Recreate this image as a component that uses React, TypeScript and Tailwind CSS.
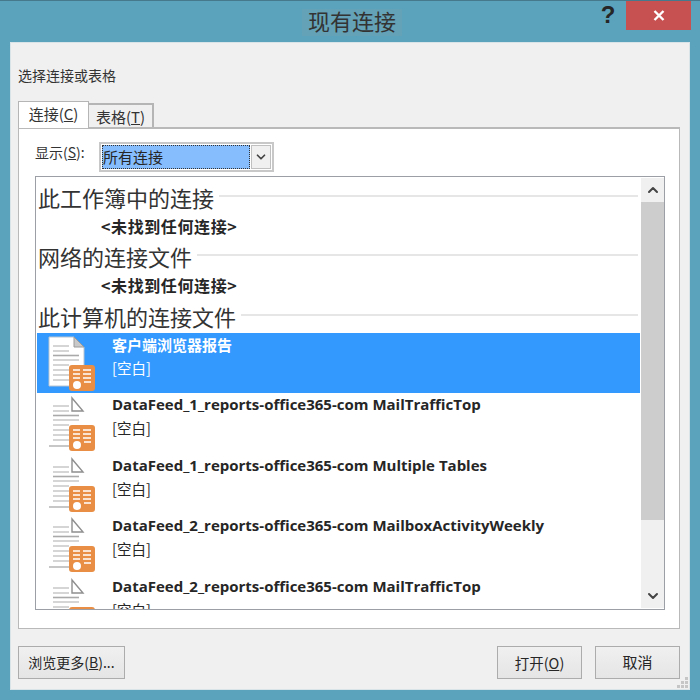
import { ChevronDown, ChevronUp } from 'lucide-react';

const cjk = { fontFamily: '"Noto Sans CJK SC", "Noto Sans", sans-serif' };

const connections = [
  { title: '客户端浏览器报告', selected: true },
  { title: 'DataFeed_1_reports-office365-com MailTrafficTop' },
  { title: 'DataFeed_1_reports-office365-com Multiple Tables' },
  { title: 'DataFeed_2_reports-office365-com MailboxActivityWeekly' },
  { title: 'DataFeed_2_reports-office365-com MailTrafficTop' },
];

function FileIcon({ selected }: { selected?: boolean }) {
  return (
    <svg width="50" height="58" viewBox="0 0 50 58" className="shrink-0">
      {selected ? (
        <>
          <path d="M2 4H27L37 14V53H2Z" fill="#fff" stroke="#b8c4d0" strokeWidth="1" />
          <path d="M27 4V14H37Z" fill="#c9c9c9" stroke="#9a9a9a" strokeWidth="1" />
        </>
      ) : (
        <>
          <path d="M25 5V18H36Z" fill="#fff" stroke="#8f8f8f" strokeWidth="1.4" />
          <path d="M2 53H22" stroke="#8f8f8f" strokeWidth="1" />
        </>
      )}
      <path d="M6 13H22M6 18H22M6 27H32M6 32H22M6 37H22M6 42H22M6 47H22" stroke="#c8c8c8" strokeWidth="1.3" />
      <path d="M6 22.5H32" stroke="#a9a9a9" strokeWidth="1.6" />
      <rect x="22" y="32" width="26" height="26" rx="3" fill="#e88f45" />
      <path d="M26 37H33M36 37H44M26 41H33M36 41H44M26 45H33M36 45H44M37 49H44" stroke="#fff" strokeWidth="1.4" />
      <circle cx="30" cy="52" r="4" fill="#fff" />
    </svg>
  );
}

function SectionHeading({ text }: { text: string }) {
  return (
    <div className="flex items-center h-[30px] pl-[2px] pr-[2px] gap-[5px]">
      <span className="text-[22px] leading-[30px] text-[#333] whitespace-nowrap">{text}</span>
      <div className="flex-1 h-[2px] bg-[#e6e6e6] mt-[-3px]" />
    </div>
  );
}

function NotFound() {
  return (
    <div className="h-[29px] pl-[65px] text-[16px] leading-[29px] font-bold text-[#262626] tracking-[0.6px]">
      {'<未找到任何连接>'}
    </div>
  );
}

function DialogButton({ children, className }: { children: React.ReactNode; className: string }) {
  return (
    <button className={`h-[33px] border border-[#acacac] bg-gradient-to-b from-[#f0f0f0] to-[#e5e5e5] text-[#262626] ${className}`}>
      {children}
    </button>
  );
}

export default function App() {
  return (
    <div style={cjk} className="w-[700px] h-[700px] flex flex-col bg-[#5ba3bd] border-t border-[#47798c] overflow-hidden">
      {/* title bar */}
      <div className="h-[41px] shrink-0 flex items-start">
        <div className="ml-[302px] mt-[8px] w-[100px] h-[27px] bg-[#64a2b7] text-center text-[22px] leading-[23px] text-[#333]">
          现有连接
        </div>
        <div className="ml-[196px] mt-[-2px] w-[20px] text-[24px] leading-[32px] font-bold text-[#262626] text-center" style={{ fontFamily: '"Liberation Sans", sans-serif' }}>
          ?
        </div>
        <div className="ml-[8px] w-[65px] h-[29px] bg-[#c75050] flex items-center justify-center">
          <svg width="12" height="11" viewBox="0 0 12 11">
            <path d="M1.5 1L10.5 10M10.5 1L1.5 10" stroke="#fff" strokeWidth="2.4" />
          </svg>
        </div>
      </div>

      {/* client area */}
      <div className="relative ml-[10px] w-[680px] h-[648px] bg-[#f0f0f0] border border-[#d9e4e8] pl-[7px] flex flex-col">
        <div className="h-[19px] mt-[23px] text-[14px] leading-[19px] text-[#333]">选择连接或表格</div>

        <div className="flex items-end h-[26px] mt-[16px]">
          <div className="relative z-10 h-[27px] mb-[-1px] w-[71px] bg-white border border-b-0 border-[#b5b5b5] text-center text-[15px] leading-[23px] text-[#333]">
            连接(<span className="underline">C</span>)
          </div>
          <div className="h-[24px] w-[65px] bg-[#f0f0f0] border border-b-0 border-l-0 border-[#b5b5b5] border-t-2 border-r-2 text-center text-[15px] leading-[23px] text-[#333]">
            表格(<span className="underline">T</span>)
          </div>
        </div>

        {/* tab panel */}
        <div className="w-[662px] h-[502px] bg-white border border-[#b9b9b9] border-t-2 pl-[16px]">
          <div className="flex items-center h-[30px] mt-[13px]">
            <span className="w-[64px] pb-[10px] text-[14px] text-[#333]">
              显示(<span className="underline">S</span>):
            </span>
            <div className="flex items-center w-[175px] h-[30px] border-2 border-[#c8c8c8] bg-white p-[1px]">
              <div className="flex-1 h-[24px] bg-[#85bdfd] border border-dotted border-[#333] text-[15px] leading-[21px] text-[#262626]">
                所有连接
              </div>
              <div className="w-[20px] h-[24px] ml-[1px] flex items-center justify-center bg-[#f0f0f0] border border-[#c0c0c0]">
                <ChevronDown size={14} strokeWidth={3} color="#444" />
              </div>
            </div>
          </div>

          {/* connection list */}
          <div className="flex w-[630px] h-[434px] mt-[4px] border border-[#9c9fa5] bg-white overflow-hidden">
            <div className="w-[604px] pt-[5px] overflow-hidden">
              <SectionHeading text="此工作簿中的连接" />
              <NotFound />
              <SectionHeading text="网络的连接文件" />
              <NotFound />
              <div className="h-[1px]" />
              <SectionHeading text="此计算机的连接文件" />
              <div className="h-[2px]" />
              {connections.map((c) => (
                <div
                  key={c.title}
                  className={`flex ml-[1px] pl-[10px] ${c.selected ? 'h-[60px] bg-[#3399ff] text-white' : 'h-[60.5px] text-[#262626]'}`}
                >
                  <FileIcon selected={c.selected} />
                  <div className={`ml-[15px] flex flex-col ${c.selected ? 'pt-[1px]' : ''}`}>
                    <div className="text-[15px] leading-[22px] font-bold whitespace-nowrap" style={{ fontFamily: '"Open Sans", "Noto Sans CJK SC", sans-serif' }}>
                      {c.title}
                    </div>
                    <div className={`text-[14.5px] leading-[22px] ${c.selected ? 'mt-[1px]' : 'mt-[2px]'}`}>[空白]</div>
                  </div>
                </div>
              ))}
            </div>
            {/* scrollbar */}
            <div className="w-[23px] ml-[1px] mt-[1px] mb-[1px] bg-[#f0f0f0] flex flex-col">
              <div className="h-[24px] flex items-center justify-center">
                <ChevronUp size={16} strokeWidth={3} color="#444" />
              </div>
              <div className="h-[318px] bg-[#cdcdcd]" />
              <div className="flex-1 flex items-end justify-center pb-[4px]">
                <ChevronDown size={16} strokeWidth={3} color="#444" />
              </div>
            </div>
          </div>
        </div>

        {/* footer buttons */}
        <div className="flex mt-[17px] w-[662px]">
          <DialogButton className="w-[107px] text-[14px]">
            浏览更多(<span className="underline">B</span>)...
          </DialogButton>
          <DialogButton className="w-[85px] ml-auto text-[14.5px]">
            打开(<span className="underline">O</span>)
          </DialogButton>
          <DialogButton className="w-[85px] ml-[13px] text-[15px]">取消</DialogButton>
        </div>

        {/* resize grip */}
        <svg width="13" height="13" viewBox="0 0 13 13" className="absolute right-0 bottom-0">
          <path d="M9 1h3v3H9zM5 5h3v3H5zM9 5h3v3H9zM1 9h3v3H1zM5 9h3v3H5zM9 9h3v3H9z" fill="#c6c6c6" />
        </svg>
      </div>
    </div>
  );
}
